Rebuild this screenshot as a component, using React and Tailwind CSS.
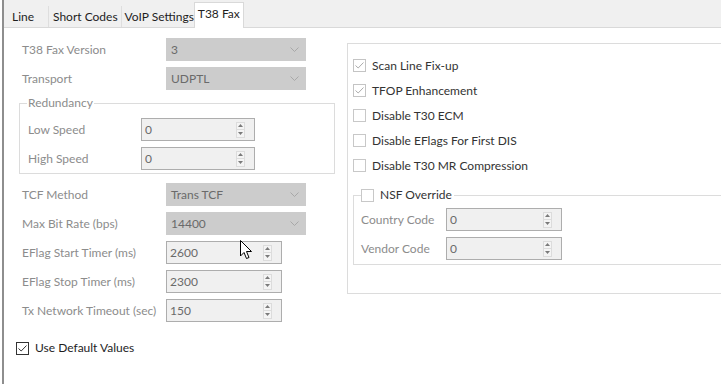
import React from "react";

const font = { fontFamily: "Lato, 'Noto Sans', sans-serif" };

function Chevron(){
  return (
    <svg width="9" height="5" viewBox="0 0 9 5" className="shrink-0">
      <polyline points="0.5,0.5 4.5,4.5 8.5,0.5" fill="none" stroke="#a8a8a8" strokeWidth="1"/>
    </svg>
  );
}

function Select({ value }){
  return (
    <div className="w-[140px] h-[23px] bg-[#cccccc] flex items-center justify-between pl-[5px] pr-[7px] text-[#6a6a6a]">
      <span>{value}</span>
      <Chevron/>
    </div>
  );
}

function Spin({ value, w = "w-[116px]" }){
  return (
    <div className={`${w} h-[23px] border border-[#adadad] bg-[#f0f0f0] flex items-center justify-between pl-[3px] pr-[9px] text-[#6a6a6a]`}>
      <span>{value}</span>
      <div className="flex flex-col w-[9px]">
        <div className="h-[8px] border border-[#dcdcdc] bg-[#f4f4f4] flex items-center justify-center">
          <svg width="5" height="3" viewBox="0 0 5 3"><polygon points="2.5,0 5,3 0,3" fill="#7a7a7a"/></svg>
        </div>
        <div className="h-[8px] border border-t-0 border-[#dcdcdc] bg-[#f4f4f4] flex items-center justify-center">
          <svg width="5" height="3" viewBox="0 0 5 3"><polygon points="0,0 5,0 2.5,3" fill="#7a7a7a"/></svg>
        </div>
      </div>
    </div>
  );
}

function Row({ label, lw = "w-[144px]", children }){
  return (
    <div className="flex items-center h-[23px]">
      <div className={`${lw} text-[#8c8c8c] whitespace-nowrap`}>{label}</div>
      {children}
    </div>
  );
}

function Check({ checked, tone = "light" }){
  const border = tone === "dark" ? "border-[#333333]" : tone === "dis" ? "border-[#c4c4c4]" : "border-[#c8c8c8]";
  const mark = tone === "dark" ? "#333333" : "#ababab";
  return (
    <div className={`w-[13px] h-[13px] border ${border} bg-white flex items-center justify-center shrink-0`}>
      {checked && (
        <svg width="9" height="7" viewBox="0 0 9 7">
          <polyline points="0.5,3.5 3.2,6 8.5,0.5" fill="none" stroke={mark} strokeWidth="1"/>
        </svg>
      )}
    </div>
  );
}

function CheckRow({ label, checked, tone }){
  return (
    <div className="flex items-center h-[25px] gap-[6px] text-[#333333]">
      <Check checked={checked} tone={tone}/>
      <span>{label}</span>
    </div>
  );
}

export default function App(){
  return (
    <div className="relative w-[721px] h-[384px] overflow-hidden bg-white text-[12px] leading-[16px] flex" style={font}>
      <div className="w-[2px] shrink-0 bg-white"/>
      <div className="w-[2px] shrink-0 bg-[#8e8e8e]"/>
      <div className="flex-1 flex flex-col">
        {/* tab strip */}
        <div className="h-[28px] bg-[#f0f0f0] border-b border-[#d9d9d9] flex items-end">
          <div className="w-[45px] h-[21px] pl-[8px] flex items-center border-r border-[#dedede] text-[#1e1e1e]">Line</div>
          <div className="h-[21px] pl-[4px] pr-[3px] flex items-center border-r border-[#dedede] text-[#1e1e1e] whitespace-nowrap">Short Codes</div>
          <div className="h-[21px] pl-[3px] pr-0 flex items-center text-[#1e1e1e] whitespace-nowrap">VoIP Settings</div>
          <div className="h-[26px] -mb-px pl-[3px] pr-[3px] pb-[4px] flex items-center bg-white border border-b-0 border-[#d9d9d9] text-[#1e1e1e] whitespace-nowrap">T38 Fax</div>
        </div>

        <div className="flex">
          {/* left column */}
          <div className="w-[331px] shrink-0 pl-[12px] pt-[10px] flex flex-col">
            <div className="pl-[6px] flex flex-col gap-[6px]">
              <Row label="T38 Fax Version"><Select value="3"/></Row>
              <Row label="Transport"><Select value="UDPTL"/></Row>
            </div>
            <fieldset className="ml-[3px] mt-[5px] w-[316px] border border-[#dcdcdc] pl-[8px] pb-[3px]">
              <legend className="px-[1px] -ml-[1px] text-[#8c8c8c]">Redundancy</legend>
              <div className="pt-[7px] flex flex-col gap-[6px]">
                <Row label="Low Speed" lw="w-[113px]"><Spin value="0" w="w-[114px]"/></Row>
                <Row label="High Speed" lw="w-[113px]"><Spin value="0" w="w-[114px]"/></Row>
              </div>
            </fieldset>
            <div className="pl-[6px] mt-[9px] flex flex-col gap-[6px]">
              <Row label="TCF Method"><Select value="Trans TCF"/></Row>
              <Row label="Max Bit Rate (bps)"><Select value="14400"/></Row>
              <Row label="EFlag Start Timer (ms)"><Spin value="2600"/></Row>
              <Row label="EFlag Stop Timer (ms)"><Spin value="2300"/></Row>
              <Row label="Tx Network Timeout (sec)"><Spin value="150"/></Row>
            </div>
            <div className="mt-[18px] flex items-center gap-[6px] text-[#1e1e1e]">
              <Check checked tone="dark"/>
              <span>Use Default Values</span>
            </div>
          </div>

          {/* right panel */}
          <div className="ml-[12px] mt-[15px] w-[400px] h-[251px] shrink-0 border border-[#dcdcdc] pl-[5px] pt-[9px]">
            <CheckRow label="Scan Line Fix-up" checked tone="dis"/>
            <CheckRow label="TFOP Enhancement" checked tone="dis"/>
            <CheckRow label="Disable T30 ECM"/>
            <CheckRow label="Disable EFlags For First DIS"/>
            <CheckRow label="Disable T30 MR Compression"/>
            <fieldset className="mt-[9px] w-[390px] border border-[#dcdcdc] pl-[7px] pb-[4px]">
              <legend className="pr-[2px] flex items-center gap-[6px] text-[#333333]">
                <Check/>
                <span>NSF Override</span>
              </legend>
              <div className="pt-[5px] flex flex-col gap-[6px]">
                <Row label="Country Code" lw="w-[85px]"><Spin value="0"/></Row>
                <Row label="Vendor Code" lw="w-[85px]"><Spin value="0"/></Row>
              </div>
            </fieldset>
          </div>
        </div>
      </div>

      {/* mouse pointer */}
      <svg className="absolute left-[240px] top-[240px]" width="13" height="20" viewBox="0 0 13 20">
        <path d="M0.5,0.5 L0.5,16 L4,12.5 L6.5,18.5 L9,17.5 L6.5,11.5 L11.5,11.5 Z" fill="#ffffff" stroke="#000000" strokeWidth="1" strokeLinejoin="round"/>
      </svg>
    </div>
  );
}
